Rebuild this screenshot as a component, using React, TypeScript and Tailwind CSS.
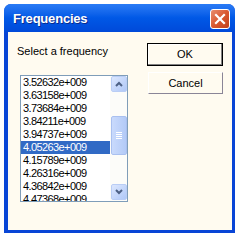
import React from 'react';

const frequencies = [
  '3.52632e+009',
  '3.63158e+009',
  '3.73684e+009',
  '3.84211e+009',
  '3.94737e+009',
  '4.05263e+009',
  '4.15789e+009',
  '4.26316e+009',
  '4.36842e+009',
  '4.47368e+009',
];

function ScrollButton({ dir }: { dir: 'up' | 'down' }) {
  return (
    <div className="w-[16px] h-[16px] mx-auto rounded-[2px] border border-[#B9CDF5] bg-gradient-to-br from-[#DCE7FE] to-[#B0C8F7] flex items-center justify-center">
      <svg width="8" height="6" viewBox="0 0 8 6">
        {dir === 'up' ? (
          <path d="M1 5 L4 2 L7 5" stroke="#4D6185" strokeWidth="2" fill="none" />
        ) : (
          <path d="M1 1 L4 4 L7 1" stroke="#4D6185" strokeWidth="2" fill="none" />
        )}
      </svg>
    </div>
  );
}

export default function App() {
  const selected = 5;

  return (
    <div className="w-[240px] h-[236px] bg-white pt-[4px] pl-[4px] font-['Liberation_Sans',Arial,sans-serif]">
      <div className="w-[231px] h-[229px] flex flex-col rounded-t-[7px] overflow-hidden bg-[#0845D6]">
        {/* Title bar */}
        <div className="h-[28px] flex items-start justify-between pl-[9px] pr-[5px] bg-gradient-to-b from-[#2A7BF5] via-[#0058E6] to-[#0049D9]">
          <span className="mt-[7px] text-white font-bold text-[13px] leading-[15px] tracking-[-0.2px] [text-shadow:1px_1px_#0B2A8C]">
            Frequencies
          </span>
          <button className="mt-[5px] w-[20px] h-[20px] rounded-[3px] border border-white bg-gradient-to-br from-[#E88D6E] via-[#D9582F] to-[#C0401A] flex items-center justify-center">
            <svg width="12" height="12" viewBox="0 0 12 12">
              <path d="M2 2 L10 10 M10 2 L2 10" stroke="white" strokeWidth="2.2" strokeLinecap="square" />
            </svg>
          </button>
        </div>

        {/* Body */}
        <div className="flex-1 ml-[4px] mr-[3px] mb-[3px] bg-[#FFFBF0] flex">
          <div className="flex flex-col pt-[13px] pl-[9px]">
            <div className="text-[11px] leading-[13px] text-black">Select a frequency</div>
            <div className="mt-[17px] ml-[3px] w-[108px] h-[127px] border border-[#7F9DB9] bg-white flex overflow-hidden">
              <div className="flex-1 flex flex-col overflow-hidden">
                {frequencies.map((f, i) => (
                  <div
                    key={f}
                    className={
                      'shrink-0 h-[13px] leading-[13px] pl-[2px] text-[11px] tracking-[-0.6px] ' +
                      (i === selected ? 'bg-[#316AC5] text-white' : 'text-black')
                    }
                  >
                    {f}
                  </div>
                ))}
              </div>
              <div className="w-[17px] bg-[#FCFCF9] flex flex-col">
                <ScrollButton dir="up" />
                <div className="mt-[24px] w-[16px] h-[39px] mx-auto rounded-[2px] border border-[#A9C0F0] bg-gradient-to-r from-[#C9DAFC] to-[#B3CAF7] flex flex-col items-center justify-center gap-[1px]">
                  <div className="w-[6px] h-[1px] bg-white" />
                  <div className="w-[6px] h-[1px] bg-white" />
                  <div className="w-[6px] h-[1px] bg-white" />
                  <div className="w-[6px] h-[1px] bg-white" />
                </div>
                <div className="flex-1" />
                <div className="mb-[1px]">
                  <ScrollButton dir="down" />
                </div>
              </div>
            </div>
          </div>

          <div className="flex flex-col pt-[11px] ml-[19px]">
            <button className="w-[76px] h-[23px] border border-black bg-[#FFFBF0] shadow-[inset_-1px_-1px_#808080,inset_1px_1px_#FFFFFF] text-[11px] text-black">
              OK
            </button>
            <button className="mt-[6px] ml-[1px] w-[75px] h-[22px] border-r border-b border-[#8A8597] border-t border-l border-t-white border-l-white bg-[#FFFBF0] text-[11px] text-black">
              Cancel
            </button>
          </div>
        </div>
      </div>
    </div>
  );
}
